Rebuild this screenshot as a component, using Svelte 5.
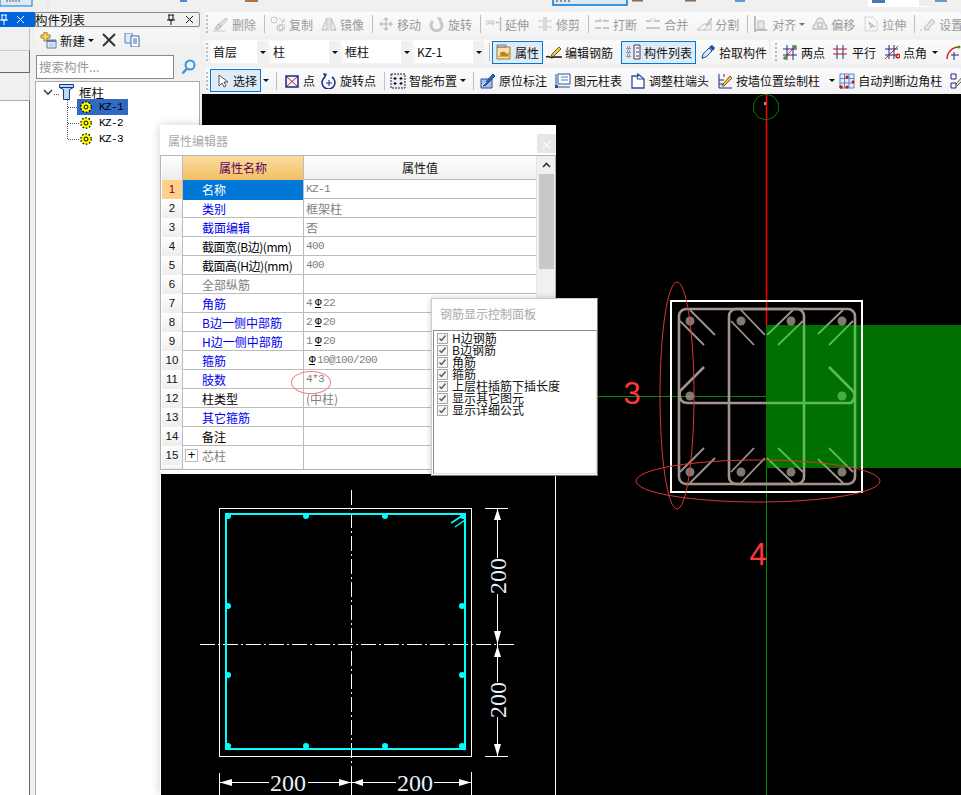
<script>
  const icons = {
    del: '<path d="M2 13l3-5 3 3-3 2.500z" fill="#d8d8d8" stroke="#bbb"/><path d="M6 8l7-6 1.500 1.500-6.500 7z" fill="#e4e4e4" stroke="#bbb"/><path d="M0 15h12" stroke="#c8c8c8"/>',
    copy: '<circle cx="4" cy="4" r="3" fill="none" stroke="#c4c4c4"/><circle cx="10" cy="12" r="3" fill="none" stroke="#bbb"/><circle cx="12" cy="11" r="3" fill="none" stroke="#c8c8c8"/><path d="M9 2l5 4M14 2v4h-3" fill="none" stroke="#c4c4c4"/>',
    mirror: '<path d="M1 14L6 2v12zM10 2l5 12h-5z" fill="#eee" stroke="#bbb"/><path d="M8 1v14" stroke="#ccc"/>',
    move: '<path d="M8 2v12M2 8h12" stroke="#c4c4c4" stroke-width="1.500"/><path d="M8 1l3 3H5zM8 15l3-3H5zM1 8l3-3v6zM15 8l-3-3v6z" fill="#c4c4c4"/>',
    rot: '<path d="M4 5a5.500 5.500 0 1 0 7 0" fill="none" stroke="#c8c8c8" stroke-width="3"/><path d="M8 1l5 1-2 5z" fill="#c8c8c8"/>',
    ext: '<path d="M0 5h3v3H0zM5 5h3v3H5z" fill="none" stroke="#c0c0c0"/><path d="M10 6.500h3M14.500 1v14" stroke="#bbb" stroke-width="1.500"/>',
    trim: '<path d="M1 5h5M1 11h5M10 5h5M10 11h5" stroke="#c4c4c4"/><path d="M7 1v14M9 1v14" stroke="#bbb"/>',
    brk: '<path d="M1 5h5v-2M9 5h6M1 12h6M9 12h6" fill="none" stroke="#c8c8c8" stroke-width="2"/><path d="M7 3v3M11 3v3" stroke="#ccc"/>',
    merge: '<path d="M1 5h5M9 5h6M1 12h14" fill="none" stroke="#c8c8c8" stroke-width="2"/><path d="M7 2v3M10 2v3" stroke="#ccc"/>',
    split: '<path d="M1 14h14V6L8 14M1 14l7-6h6" fill="none" stroke="#c0c0c0"/><path d="M10 9l5-7 1 1-5 7z" fill="#ddd" stroke="#bbb"/>',
    align: '<path d="M2 0v16M2 14h12" stroke="#bbb" stroke-width="2"/><path d="M5 5h6v8H5z" fill="#e6e6e6" stroke="#bbb"/>',
    offset: '<path d="M1 13c0-4 2-5 3-6 0-3 2-5 4-5s4 2 4 5c1 1 3 2 3 6z" fill="#eee" stroke="#c4c4c4" stroke-width="1.500"/><circle cx="8" cy="9" r="2.500" fill="none" stroke="#c4c4c4" stroke-width="1.500"/>',
    stretch: '<path d="M2 1h8l4 4v10H2z" fill="none" stroke="#c8c8c8" stroke-dasharray="2 1"/><path d="M6 6l2 6 1-2 3 1z" fill="#ddd" stroke="#bbb"/>',
    gear2: '<path d="M0 14h2M4 14h2M8 14h2" stroke="#bbb"/><path d="M4 12l8-9 3 3-8 8z" fill="#e6e6e6" stroke="#bbb"/>',
    prop: '<path d="M1 3h13v12H1z" fill="#f8e3b0" stroke="#8f7a4c"/><path d="M1 1h9v2H1z" fill="#dde" stroke="#777"/><path d="M2 13l5-6 3 3 4-3v6H2z" fill="#e8a33c"/><path d="M4 9h6M5 11h7" stroke="#8a5a10"/>',
    edit: '<path d="M0 13c4-2 3 2 7 0h9" fill="none" stroke="#111" stroke-width="1.500"/><path d="M6 10l7-7 2 2-7 7-3 1z" fill="#f3c550" stroke="#7a5a10"/>',
    list: '<path d="M9 1h6v14H9z" fill="#eef3fa" stroke="#445"/><path d="M11 4h3M11 8h3M11 12h3" stroke="#446"/><path d="M2 3h3v2H2zM2 7h3v2H2zM2 11h3v2H2z" fill="none" stroke="#445" stroke-dasharray="1 1"/>',
    pick: '<path d="M2 14l1-4 6-6 3 3-6 6z" fill="#dceaf8" stroke="#1b4f9c"/><path d="M9 3l3-2 3 3-2 3z" fill="#1b4f9c"/><path d="M2 15l1-1" stroke="#1b4f9c"/>',
    twop: '<path d="M5 1v15M11 1v15M1 5h14M1 11h14" stroke="#1a2a80"/><path d="M2 15L14 1" stroke="#d02020"/><circle cx="3" cy="14" r="1.800" fill="#3a9a30"/><circle cx="13" cy="3" r="1.800" fill="#3a9a30"/>',
    para: '<path d="M4 1v14M10 1v14" stroke="#1a2a80"/><path d="M0 5h14M0 10h14" stroke="#b01030"/>',
    ang: '<path d="M5 1v14M10 1v14M1 5h13M1 11h13" stroke="#1a2a80"/><path d="M1 15L14 2" stroke="#d02020"/><circle cx="14" cy="12" r="1.800" fill="none" stroke="#d02020" stroke-width="1.500"/>',
    arc: '<path d="M2 15a12 12 0 0 1 12-12" fill="none" stroke="#d02020" stroke-width="1.500"/><circle cx="14" cy="3" r="1.500" fill="#3a9a30"/><path d="M9 8v8M6 11h8" stroke="#1a2a80"/>',
    sel: '<path d="M5 2v11l3-3 2 4 2-1-2-4h4z" fill="#fff" stroke="#555"/>',
    pt: '<path d="M2 3h12v11H2z" fill="#f0f2fa" stroke="#1a2a80" stroke-width="1.500"/><path d="M3 4l10 9M13 4L3 13" stroke="#d02020"/>',
    rotpt: '<path d="M4 4a6.500 6.500 0 1 0 7 0" fill="none" stroke="#1a2a80" stroke-width="1.500"/><path d="M2 0l4 1-2 4z" fill="#1a2a80"/><path d="M8 7v6M5 10h6" stroke="#1a2a80"/>',
    smart: '<path d="M1 1h14v14H1z" fill="#e8ecf4" stroke="#223" stroke-dasharray="2 1"/><path d="M5 4v3M3.500 5.500h3M11 4v3M9.500 5.500h3M5 9v3M3.500 10.500h3M11 9v3M9.500 10.500h3" stroke="#000"/>',
    mark: '<path d="M1 6h11v9H1z" fill="#a9bfe4" stroke="#2a4f96"/><path d="M4 11l9-10 2 2-9 9-3 1z" fill="#2c6cc8" stroke="#163e86"/><path d="M2 13l4-4" stroke="#fff"/>',
    table: '<path d="M3 1h12v10H3z" fill="#fff" stroke="#2a4f96"/><path d="M6 4h7M6 7h7" stroke="#5a78b0"/><path d="M1 1v13h14" fill="none" stroke="#2a4f96"/><path d="M0 12h3v3H0z" fill="#2a4f96"/>',
    adj: '<path d="M2 3h6v-2l6 5v9H2z" fill="#fff" stroke="#2a4f96" stroke-width="1.300"/><path d="M8 1l-1 5h7" fill="none" stroke="#2a4f96"/>',
    wall: '<path d="M2 1v14h13M2 7h5M2 11h5M7 1v3" fill="none" stroke="#1a2a80"/><path d="M6 11l7-8 2 2-8 8-2 0z" fill="#f3c550" stroke="#7a5a10"/>',
    auto: '<path d="M1 1h14v14H1zM5.500 1v14M10 1v14M1 5.500h14M1 10h14" fill="#e4edfa" stroke="#5c82bb"/><circle cx="8" cy="4" r="1.600" fill="#d01010"/><circle cx="2" cy="14" r="1.800" fill="#d01010"/><circle cx="8" cy="14" r="1.600" fill="#d01010"/><circle cx="14" cy="9" r="1.400" fill="#d01010"/>',
    next: '<path d="M1 1h5v5H1zM1 10h5v5H1z" fill="none" stroke="#1a2a80"/><path d="M6 11l7-8 2 2-8 8z" fill="#ddd" stroke="#666"/>'
  };

  const SEP = { sep: true };
  const row1 = [
    { i: 'del', t: '删除' }, SEP, { i: 'copy', t: '复制' }, { i: 'mirror', t: '镜像' }, SEP,
    { i: 'move', t: '移动' }, { i: 'rot', t: '旋转' }, SEP, { i: 'ext', t: '延伸' }, { i: 'trim', t: '修剪' }, SEP,
    { i: 'brk', t: '打断' }, { i: 'merge', t: '合并' }, { i: 'split', t: '分割' }, SEP,
    { i: 'align', t: '对齐' }, { caret: true }, { i: 'offset', t: '偏移' }, { i: 'stretch', t: '拉伸' }, SEP,
    { i: 'gear2', t: '设置' }
  ];
  const combos = [
    { t: '首层', w: 'c-s' }, { t: '柱', w: '' }, { t: '框柱', w: '' }, { t: 'KZ-1', w: '' }
  ];
  const row2a = [
    { i: 'prop', t: '属性', on: true }, { i: 'edit', t: '编辑钢筋' }, { i: 'list', t: '构件列表', on: true }, { i: 'pick', t: '拾取构件' }
  ];
  const row2b = [
    { i: 'twop', t: '两点' }, { i: 'para', t: '平行' }, { i: 'ang', t: '点角' }, { caret: true, cls: 'c-near' }, { i: 'arc', t: '' }
  ];
  const row3 = [
    { i: 'sel', t: '选择', on: true }, { caret: true }, SEP,
    { i: 'pt', t: '点', cls: 'tight push2' }, { i: 'rotpt', t: '旋转点' }, SEP,
    { i: 'smart', t: '智能布置' }, { caret: true }, SEP,
    { i: 'mark', t: '原位标注', cls: 'push1' }, { i: 'table', t: '图元柱表' }, { i: 'adj', t: '调整柱端头' },
    { i: 'wall', t: '按墙位置绘制柱' }, { caret: true, cls: 'c-far' }, { i: 'auto', t: '自动判断边角柱' }, { i: 'next', t: '' }
  ];

  const props = [
    { n: '名称', c: 'blue', v: 'KZ-1', sel: true },
    { n: '类别', c: 'blue', v: '框架柱' },
    { n: '截面编辑', c: 'blue', v: '否' },
    { n: '截面宽(B边)(mm)', c: 'black', v: '400' },
    { n: '截面高(H边)(mm)', c: 'black', v: '400' },
    { n: '全部纵筋', c: 'grey', v: '' },
    { n: '角筋', c: 'blue', v: '4', bar: '22' },
    { n: 'B边一侧中部筋', c: 'blue', v: '2', bar: '20' },
    { n: 'H边一侧中部筋', c: 'blue', v: '1', bar: '20' },
    { n: '箍筋', c: 'blue', v: '', bar: '10@100/200' },
    { n: '肢数', c: 'blue', v: '4*3' },
    { n: '柱类型', c: 'black', v: '(中柱)' },
    { n: '其它箍筋', c: 'blue', v: '' },
    { n: '备注', c: 'black', v: '' },
    { n: '芯柱', c: 'grey', v: '', plus: true }
  ];
  const isCjk = (s) => /[\u4e00-\u9fff]/.test(s);

  const checks = ['H边钢筋', 'B边钢筋', '角筋', '箍筋', '上层柱插筋下插长度', '显示其它图元', '显示详细公式'];
  const kids = ['KZ-1', 'KZ-2', 'KZ-3'];

  // plan of the column on the main canvas
  const hooks = [
    [680, 321, 704, 345], [690, 310, 715, 335], [731, 321, 754, 345], [741, 310, 765, 335],
    [793, 310, 767, 335], [803, 321, 778, 345], [843, 310, 818, 334], [853, 321, 829, 345]
  ];
  const bars = [
    [690, 321], [741, 321], [791, 321], [842, 321], [690, 396], [842, 396],
    [690, 472], [741, 472], [791, 472], [842, 472]
  ];
  const dots = [
    [228, 516], [306, 516], [385, 516], [463, 516], [228, 606], [462, 606],
    [228, 675], [462, 675], [228, 746], [306, 746], [385, 746], [462, 746]
  ];
  const ring = Array.from({ length: 10 }, (_, k) => {
    const a = (k * Math.PI) / 5 + Math.PI / 10;
    return `${(766 + 13 * Math.cos(a)).toFixed(1)},${(107 + 13 * Math.sin(a)).toFixed(1)}`;
  }).join(' ');
</script>

{#snippet entries(list)}
  {#each list as e}
    {#if e.sep}
      <span class="sep"></span>
    {:else if e.caret}
      <span class="caret {e.cls ?? ''}"></span>
    {:else}
      <span class="tool {e.cls ?? ''}" class:on={e.on}>
        <svg class="ico" viewBox="0 0 16 16" width="16" height="16">{@html icons[e.i]}</svg>
        {#if e.t}<span>{e.t}</span>{/if}
      </span>
    {/if}
  {/each}
{/snippet}

{#snippet rebars(color)}
  <g fill="none" stroke={color} stroke-width="2.600">
    <rect x="679" y="309" width="176" height="175" rx="7" />
    <rect x="729" y="309" width="75" height="175" rx="7" />
    <path d="M704 367L680 391q-2 12 8 12H851q6-6 2-12L829 367" />
    {#each hooks as [a, b, c, d]}
      <path d="M{a} {b}L{c} {d}" stroke-width="1.800" />
      <path d="M{a} {793 - b}L{c} {793 - d}" stroke-width="1.800" />
    {/each}
  </g>
  {#each bars as [x, y]}
    <circle cx={x} cy={y} r="4.500" fill={color} opacity="0.8" />
  {/each}
{/snippet}

{#snippet gear()}
  <svg class="gear" viewBox="0 0 12 12" width="12" height="12">
    <circle cx="6" cy="6" r="5.200" fill="#ff0" stroke="#000" stroke-width="1.300" stroke-dasharray="1.600 1.700" />
    <circle cx="6" cy="6" r="4" fill="#ff0" />
    <circle cx="6" cy="6" r="2" fill="#ff0" stroke="#000" />
  </svg>
{/snippet}

<div class="page">
  <svg class="ribbon" width="961" height="12" viewBox="0 0 961 12">
    <rect x="0" y="-2" width="32" height="8" fill="#dceaf5" stroke="#0078d7" />
    <path d="M6 1h14" stroke="#555" stroke-dasharray="2 1" />
    <path d="M48 0v12" stroke="#e4e4e4" />
    <rect x="180" y="0" width="7" height="2" fill="#3c8fd8" />
    <rect x="245" y="0" width="13" height="2" fill="#b5703c" />
    <rect x="553" y="-2" width="74" height="7" fill="#dceaf5" stroke="#0078d7" stroke-width="1.500" />
    <path d="M556 1h16" stroke="#333" stroke-dasharray="2 2" />
    <rect x="632" y="0" width="11" height="1.500" fill="#8a6a4a" />
    <rect x="685" y="0" width="11" height="1.500" fill="#8a6a4a" />
    <rect x="735" y="0" width="10" height="2" fill="#5a9ad8" />
    <rect x="868" y="0" width="62" height="7" fill="#fff" />
    <rect x="872" y="0" width="13" height="3" fill="#4a78b8" />
    <rect x="919" y="0" width="11" height="6" fill="#eee" />
    <rect x="935" y="0" width="12" height="2" fill="#6a9ad0" />
  </svg>

  <div class="work">
    <aside class="dock">
      <div class="dock-title">
        <svg width="8" height="11" viewBox="0 0 8 11"><path d="M1 1h6M2 1v5h4V1M0 6h8M4 6v5" stroke="#fff" fill="none" /></svg>
        <svg width="9" height="9" viewBox="0 0 9 9"><path d="M1 1l7 7M8 1L1 8" stroke="#fff" /></svg>
      </div>
      <div class="dock-blank"></div>
      <div class="dock-btn"></div>
      <div class="dock-gap"></div>
      <div class="dock-body"></div>
    </aside>

    <section class="list">
      <div class="list-title">
        <span class="list-name">构件列表</span>
        <svg width="8" height="11" viewBox="0 0 8 11"><path d="M1 1h6M2 1v5h4V1M0 6h8M4 6v5" stroke="#111" fill="none" /></svg>
        <svg width="9" height="9" viewBox="0 0 9 9"><path d="M1 1l7 7M8 1L1 8" stroke="#111" /></svg>
      </div>
      <div class="list-tools">
        <svg width="17" height="17" viewBox="0 0 17 17">
          <path d="M4 0h3v3h3v3H7v3H4V6H1V3h3z" fill="#f5d860" stroke="#a08020" />
          <path d="M7 8h9v8H7z" fill="#e8eef8" stroke="#5c7cb0" />
          <path d="M7 8h9v2H7z" fill="#5c7cb0" />
          <path d="M9 12h5M9 14h5" stroke="#a0b4d4" />
        </svg>
        <span class="new-label">新建</span>
        <span class="caret-s"></span>
        <svg class="x-icon" width="14" height="14" viewBox="0 0 14 14"><path d="M1 1l12 12M13 1L1 13" stroke="#333" stroke-width="2" /></svg>
        <svg class="copy-icon" width="16" height="14" viewBox="0 0 16 14">
          <path d="M1 0h7v10H1z" fill="#dfe9f7" stroke="#5a84c0" />
          <path d="M7 3h8v11H7z" fill="#fff" stroke="#3a68ae" />
          <path d="M9 6h4M9 8h4M9 10h4" stroke="#3a68ae" />
        </svg>
      </div>
      <div class="search">
        <div class="search-box">搜索构件...</div>
        <div class="search-btn">
          <svg width="15" height="16" viewBox="0 0 15 16">
            <circle cx="9" cy="6" r="4.500" fill="#e8f4fc" stroke="#3a96d8" stroke-width="2" />
            <path d="M5.500 10L1.500 14.500" stroke="#3a96d8" stroke-width="2.500" />
          </svg>
        </div>
      </div>
      <div class="tree">
        <div class="root">
          <svg class="chev" width="10" height="7" viewBox="0 0 10 7"><path d="M1 1l4 4 4-4" fill="none" stroke="#444" stroke-width="1.600" /></svg>
          <span class="h-dots"></span>
          <svg width="15" height="16" viewBox="0 0 15 16">
            <path d="M.5.500h14v3l-4 2v10h-6v-10l-4-2z" fill="#bcd8f4" stroke="#1a3a88" />
            <path d="M.5 3.500h14" stroke="#1a3a88" />
          </svg>
          <span class="root-name">框柱</span>
        </div>
        <div class="kids">
          {#each kids as k, idx}
            <div class="kid">
              <span class="h-dots long"></span>
              <span class="kid-label" class:picked={idx === 0}>
                {@render gear()}
                <span class="kid-name">{k}</span>
              </span>
            </div>
          {/each}
        </div>
      </div>
    </section>

    <main class="main">
      <div class="bars">
        <div class="toolbar off">
          <span class="handle"></span>
          {@render entries(row1)}
        </div>
        <div class="toolbar split">
          <div class="seg t2">
            <span class="handle"></span>
            {#each combos as c}
              <span class="combo {c.w}">
                <span class="combo-text">{c.t}</span>
                <span class="combo-arrow"><span class="caret-s"></span></span>
              </span>
            {/each}
            <span class="sep"></span>
            {@render entries(row2a)}
          </div>
          <div class="seg t2b">
            <span class="handle"></span>
            {@render entries(row2b)}
          </div>
        </div>
        <div class="toolbar t3">
          <span class="handle"></span>
          {@render entries(row3)}
        </div>
      </div>

      <svg class="canvas" width="759" height="701" viewBox="202 94 759 701">
        <defs>
          <clipPath id="green-part"><rect x="766" y="325" width="195" height="143" /></clipPath>
        </defs>
        <path d="M766.500 94V325" stroke="#f00" stroke-width="1.500" />
        <path d="M766.500 468V795M598 396.500H766" stroke="#0a8a0a" />
        <polygon points={ring} fill="none" stroke="#008000" />
        <rect x="764" y="102" width="2" height="3" fill="#999" />
        {@render rebars('#a3958d')}
        <rect x="766" y="325" width="195" height="143" fill="#007000" />
        <g clip-path="url(#green-part)">{@render rebars('#5dbb55')}</g>
        <rect x="671" y="301" width="191" height="191" fill="none" stroke="#fff" stroke-width="2" />
        <ellipse cx="677" cy="395.500" rx="17" ry="113.500" fill="none" stroke="#dc3535" />
        <ellipse cx="758" cy="481" rx="122" ry="21" fill="none" stroke="#dc3535" />
        <text class="note" x="632" y="404">3</text>
        <text class="note" x="758" y="565">4</text>
      </svg>
    </main>
  </div>

  <div class="dialog">
    <div class="dlg-title">
      <span>属性编辑器</span>
      <span class="dlg-close">×</span>
    </div>
    <div class="grid">
      <div class="grid-body">
        <div class="row head">
          <span class="num"></span>
          <span class="h-name">属性名称</span>
          <span class="h-val">属性值</span>
        </div>
        {#each props as p, idx}
          <div class="row" class:last={idx === props.length - 1}>
            <span class="num" class:num-sel={p.sel}>{idx + 1}</span>
            <span class="name {p.c}" class:sel={p.sel} class:unit={p.n.includes('mm')}>
              {#if p.plus}<span class="plus">+</span>{/if}
              {p.n}
            </span>
            <span class="val" class:cjk={isCjk(p.v)}>
              {p.v}{#if p.bar}<span class="grade">Φ</span>{p.bar}{/if}
            </span>
          </div>
        {/each}
        <div class="row stub">
          <span class="num"></span><span class="name"></span><span class="val"></span>
        </div>
      </div>
      <div class="scroll">
        <div class="scroll-up">
          <svg width="9" height="6" viewBox="0 0 9 6"><path d="M1 5l3.500-3.500L8 5" fill="none" stroke="#333" stroke-width="1.600" /></svg>
        </div>
        <div class="thumb"></div>
      </div>
      <span class="circle"></span>
    </div>
    <div class="dlg-gap"></div>
    <svg class="section" width="394" height="321" viewBox="161 474 394 321">
      <g fill="none" stroke="#fff">
        <rect x="219.500" y="508.500" width="252" height="248" />
        <path d="M351.500 490V795M200 644.500H516" stroke-dasharray="15 3 2 3" />
        <path d="M485 508.500H508M485 756.500H508M497.500 508V558M497.500 594V682M497.500 717V756" />
        <path d="M219.500 773V795M351.500 773V795M471.500 772V795M220 782.500H269M308 782.500H396M434 782.500H471" />
      </g>
      <path d="M497.500 509l-3.500 11h7zM497.500 644l-3.500-13h7zM497.500 646l-3.500 11h7zM497.500 756l-3.500-12h7z" fill="#fff" />
      <path d="M220 782.500l12-3.500v7zM351 782.500l-12-3.500v7zM353 782.500l10-3.500v7zM471 782.500l-12-3.500v7z" fill="#fff" />
      <rect x="226" y="514" width="239" height="235" fill="none" stroke="#0ff" stroke-width="2" />
      {#each dots as [x, y]}
        <circle cx={x} cy={y} r="3" fill="#0ff" />
      {/each}
      <path d="M451 523L462 516M455 527L465 520" stroke="#0ff" stroke-width="1.500" />
      <g class="dim">
        <text x="288" y="791">200</text>
        <text x="415" y="791">200</text>
        <text transform="translate(506 576) rotate(-90)">200</text>
        <text transform="translate(506 700) rotate(-90)">200</text>
      </g>
    </svg>
  </div>

  <div class="panel">
    <div class="panel-title">钢筋显示控制面板</div>
    <div class="checks">
      {#each checks as c}
        <div class="check">
          <svg width="11" height="11" viewBox="0 0 11 11">
            <rect x=".5" y=".5" width="10" height="10" fill="#f4f4f4" stroke="#aaa" />
            <path d="M2.500 5.500l2 2 4-5" fill="none" stroke="#555" stroke-width="1.300" />
          </svg>
          <span>{c}</span>
        </div>
      {/each}
    </div>
  </div>
</div>

<style>
  :global(body) {
    margin: 0;
    background: #f0f0f0;
  }

  .page {
    position: relative;
    width: 961px;
    height: 795px;
    overflow: hidden;
    background: #f0f0f0;
    color: #111;
    font-family: "Noto Sans CJK SC", "Liberation Sans", sans-serif;
    font-size: 12px;
  }

  .ribbon {
    display: block;
  }

  .work {
    display: grid;
    grid-template-columns: 35px 167px 759px;
    height: 783px;
  }

  /* docked pane on the far left */
  .dock {
    display: flex;
    flex-direction: column;
  }

  .dock-title {
    height: 15px;
    background: #0064dc;
    display: flex;
    align-items: center;
    justify-content: space-between;
    padding: 0 10px 0 0;
    margin-bottom: 1px;
  }

  .dock-blank {
    height: 22px;
    width: 29px;
    border-right: 1px solid #bbb;
  }

  .dock-btn {
    height: 21px;
    width: 29px;
    background: #eee;
    border-top: 1px solid #ccc;
    border-right: 1px solid #666;
    border-bottom: 1px solid #666;
  }

  .dock-gap {
    height: 27px;
    width: 29px;
    border-right: 1px solid #bbb;
  }

  .dock-body {
    flex: 1;
    width: 29px;
    background: #fff;
    border-top: 1px solid #aaa;
    border-right: 1px solid #666;
  }

  /* component list */
  .list {
    display: flex;
    flex-direction: column;
    width: 165px;
  }

  .list-title {
    display: flex;
    align-items: center;
    gap: 10px;
    padding-right: 5px;
    border: 1px solid #888;
    border-radius: 2px;
    height: 13px;
    margin-bottom: 1px;
  }

  .list-name {
    flex: 1;
    font-size: 12.500px;
    line-height: 13px;
    margin-left: -1px;
  }

  .list-tools {
    height: 24px;
    display: flex;
    align-items: center;
    padding-left: 5px;
    background: linear-gradient(#f8f8f8, #f0f0f0);
  }

  .new-label {
    margin-left: 3px;
    font-size: 12.500px;
  }

  .caret-s {
    display: inline-block;
    width: 0;
    height: 0;
    border-left: 3px solid transparent;
    border-right: 3px solid transparent;
    border-top: 3px solid #111;
  }

  .list-tools .caret-s {
    margin-left: 3px;
  }

  .x-icon {
    margin-left: 8px;
  }

  .copy-icon {
    margin-left: 8px;
  }

  .search {
    display: flex;
    align-items: center;
    margin: 3px 0 2px 1px;
    height: 24px;
  }

  .search-box {
    width: 138px;
    height: 24px;
    box-sizing: border-box;
    border: 1px solid #888;
    background: #fff;
    color: #999;
    font-size: 12.500px;
    line-height: 22px;
    padding-left: 2px;
  }

  .search-btn {
    margin-left: 5px;
    width: 19px;
    display: flex;
    justify-content: center;
  }

  .tree {
    flex: 1;
    background: #fff;
    border: 1px solid #aaa;
    border-bottom: 0;
  }

  .root {
    display: flex;
    align-items: center;
    height: 16px;
    padding: 2px 0 0 7px;
  }

  .chev {
    flex-shrink: 0;
  }

  .h-dots {
    width: 5px;
    border-top: 1px dotted #555;
    margin: 4px 0 0 1px;
  }

  .root-name {
    margin-left: 5px;
    margin-top: 1px;
    font-size: 12.500px;
  }

  .kids {
    margin: -1px 0 0 31px;
    border-left: 1px dotted #555;
    height: 40px;
  }

  .kid {
    height: 16px;
    display: flex;
    align-items: center;
  }

  .h-dots.long {
    width: 11px;
    margin: 0;
  }

  .kid-label {
    display: flex;
    align-items: center;
    width: 48px;
    height: 16px;
    margin-left: -2px;
    padding-left: 3px;
  }

  .kid-label.picked {
    background: #316ac5;
  }

  .kid-name {
    margin-left: 7px;
    font-family: "Liberation Mono", monospace;
    font-size: 11px;
    letter-spacing: -0.600px;
    color: #000;
  }

  .gear {
    flex-shrink: 0;
  }

  /* main area */
  .main {
    display: flex;
    flex-direction: column;
    min-width: 0;
  }

  .bars {
    display: flex;
    flex-direction: column;
    gap: 4px;
    height: 82px;
    padding-left: 3px;
    overflow: hidden;
  }

  .toolbar,
  .seg {
    display: flex;
    align-items: center;
    height: 24px;
    white-space: nowrap;
    border-radius: 3px;
    background: linear-gradient(#fbfbfb, #f3f3f3);
    flex-shrink: 0;
  }

  .toolbar.split {
    background: none;
    gap: 2px;
  }

  .toolbar.t3 {
    height: 25px;
  }

  .seg.t2 {
    width: 564px;
  }

  .seg.t2b {
    flex: 1;
  }

  .off {
    color: #9a9a9a;
  }

  .handle {
    width: 2px;
    height: 18px;
    margin: 0 5px 0 1px;
    flex-shrink: 0;
    background: repeating-linear-gradient(#bbb 0 2px, transparent 2px 4px);
  }

  .t2 .handle {
    margin-right: 3px;
  }

  .t2b .handle {
    margin-left: 4px;
  }

  .t3 .handle {
    margin-right: 2px;
  }

  .sep {
    width: 1px;
    height: 18px;
    background: #bfbfbf;
    margin-right: 5px;
    flex-shrink: 0;
  }

  .tool {
    display: inline-flex;
    align-items: center;
    gap: 3px;
    margin-right: 8px;
    flex-shrink: 0;
  }

  .tool.tight {
    margin-right: 6px;
  }

  .tool.push2 {
    margin-left: 2px;
  }

  .tool.push1 {
    margin-left: 1px;
  }

  .tool.on {
    box-sizing: border-box;
    height: 23px;
    padding: 0 3px;
    border: 1px solid #0078d7;
    background: #dfecf7;
    margin-right: 3px;
  }

  .t2 .tool.on:nth-last-child(2) {
    margin-right: 4px;
  }

  .t3 .tool.on {
    margin-right: 7px;
  }

  .ico {
    flex-shrink: 0;
  }

  .caret {
    flex-shrink: 0;
    width: 0;
    height: 0;
    border-left: 3px solid transparent;
    border-right: 3px solid transparent;
    border-top: 3px solid #111;
    margin: 0 7px 0 -5px;
  }

  .off .caret {
    border-top-color: #777;
  }

  .caret.c-near {
    margin-left: -3px;
  }

  .caret.c-far {
    margin: 0 4px 0 1px;
  }

  .combo {
    display: inline-flex;
    align-items: stretch;
    width: 69px;
    height: 22px;
    margin-right: 3px;
    background: #fff;
    flex-shrink: 0;
  }

  .combo.c-s {
    width: 57px;
  }

  .t2 .combo:nth-of-type(5) {
    margin-right: 5px;
  }

  .combo-text {
    flex: 1;
    padding-left: 2px;
    line-height: 22px;
  }

  .combo-arrow {
    width: 11px;
    background: #f0f0f0;
    display: flex;
    align-items: center;
    justify-content: center;
  }

  .t2 > .sep {
    margin-right: 2px;
  }

  .canvas {
    display: block;
    background: #000;
  }

  .note {
    fill: #ff3a3a;
    font-family: "Liberation Sans", sans-serif;
    font-size: 31px;
    text-anchor: middle;
  }

  /* property dialog, floating over the canvas */
  .dialog {
    position: absolute;
    left: 160px;
    top: 125px;
    width: 396px;
    height: 670px;
    display: flex;
    flex-direction: column;
    background: #fff;
    box-shadow: 0 0 10px rgba(0, 0, 0, 0.18);
  }

  .dlg-title {
    height: 30px;
    flex-shrink: 0;
    display: flex;
    align-items: center;
    justify-content: space-between;
    padding: 0 0 0 8px;
    color: #aaa;
  }

  .dlg-close {
    width: 19px;
    height: 19px;
    margin: 7px 0 0;
    background: #e6e6e6;
    color: #fff;
    text-align: center;
    line-height: 19px;
    font-size: 13px;
  }

  .grid {
    position: relative;
    display: flex;
    height: 315px;
    box-sizing: border-box;
    flex-shrink: 0;
    border: 1px solid #b4b4b4;
  }

  .grid-body {
    width: 375px;
    flex-shrink: 0;
    padding-left: 1px;
    box-sizing: border-box;
  }

  .row {
    display: grid;
    grid-template-columns: 21px 121px 1fr;
    height: 19px;
    box-sizing: border-box;
    border-bottom: 1px solid #bcbcbc;
    line-height: 20px;
  }

  .row.head {
    height: 24px;
    line-height: 24px;
    background: linear-gradient(#fff, #efefef);
  }

  .row.last {
    border-bottom: 0;
  }

  .row.stub {
    height: 4px;
    border-bottom: 0;
  }

  .num {
    border-right: 1px solid #bcbcbc;
    background: linear-gradient(#fff, #ececec);
    text-align: center;
    font-family: "Liberation Sans", sans-serif;
    font-size: 11.500px;
    line-height: 18px;
  }

  .num-sel {
    background: #fdd08c;
    color: #7a0020;
  }

  .h-name {
    background: linear-gradient(#fbdca0, #f2c062);
    color: #600060;
    text-align: center;
    border-right: 1px solid #bcbcbc;
  }

  .h-val {
    text-align: center;
  }

  .name {
    border-right: 1px solid #bcbcbc;
    padding-left: 19px;
    position: relative;
    white-space: nowrap;
  }

  .name.unit {
    letter-spacing: -0.450px;
  }

  .name.sel {
    background: #0078d7;
    color: #fff;
  }

  .blue {
    color: #0000f0;
  }

  .black {
    color: #000;
  }

  .grey {
    color: #808080;
  }

  .plus {
    position: absolute;
    left: 2px;
    top: 3px;
    width: 11px;
    height: 11px;
    border: 1px solid #bbb;
    color: #000;
    text-align: center;
    line-height: 10px;
    font-family: "Liberation Sans", sans-serif;
    font-size: 13px;
  }

  .val {
    padding-left: 2px;
    color: #808080;
    font-family: "Liberation Mono", monospace;
    font-size: 11px;
    letter-spacing: -0.600px;
    white-space: nowrap;
    line-height: 18px;
  }

  .val.cjk {
    font-family: "Noto Sans CJK SC", sans-serif;
    font-size: 12px;
    letter-spacing: 0;
    line-height: 20px;
  }

  .grade {
    display: inline-block;
    margin: 0 2px 0 3px;
    color: #000;
    font-size: 11px;
    text-decoration: underline;
  }

  .scroll {
    flex: 1;
    background: #f0f0f0;
    border-left: 1px solid #e4e4e4;
    display: flex;
    flex-direction: column;
    align-items: center;
  }

  .scroll-up {
    height: 18px;
    display: flex;
    align-items: center;
    justify-content: center;
  }

  .thumb {
    width: 15px;
    height: 95px;
    background: #c8c8c8;
  }

  .circle {
    position: absolute;
    left: 130px;
    top: 215px;
    width: 40px;
    height: 23px;
    box-sizing: border-box;
    border: 1px solid #f08080;
    border-radius: 50%;
  }

  .dlg-gap {
    height: 4px;
    flex-shrink: 0;
  }

  .section {
    display: block;
    margin-left: 1px;
    background: #000;
    flex-shrink: 0;
  }

  .dim text {
    fill: #e6f1ff;
    font-family: "Liberation Serif", serif;
    font-size: 24px;
    text-anchor: middle;
  }

  /* rebar display panel */
  .panel {
    position: absolute;
    left: 431px;
    top: 298px;
    width: 167px;
    height: 178px;
    box-sizing: border-box;
    display: flex;
    flex-direction: column;
    background: #fff;
    border: 1px solid #ccc;
    border-right-color: #777;
    border-bottom-color: #777;
    box-shadow: 0 0 6px rgba(0, 0, 0, 0.2);
    padding: 0 0 1px 1px;
  }

  .panel-title {
    height: 31px;
    line-height: 30px;
    padding-left: 7px;
    color: #aaa;
  }

  .checks {
    flex: 1;
    border: 1px solid #8a8a8a;
    border-right-color: #ddd;
    border-bottom-color: #ddd;
    padding: 1px 0 0 3px;
  }

  .check {
    display: flex;
    align-items: center;
    gap: 4px;
    height: 12px;
    line-height: 12px;
    white-space: nowrap;
  }

  .check svg {
    flex-shrink: 0;
  }
</style>
